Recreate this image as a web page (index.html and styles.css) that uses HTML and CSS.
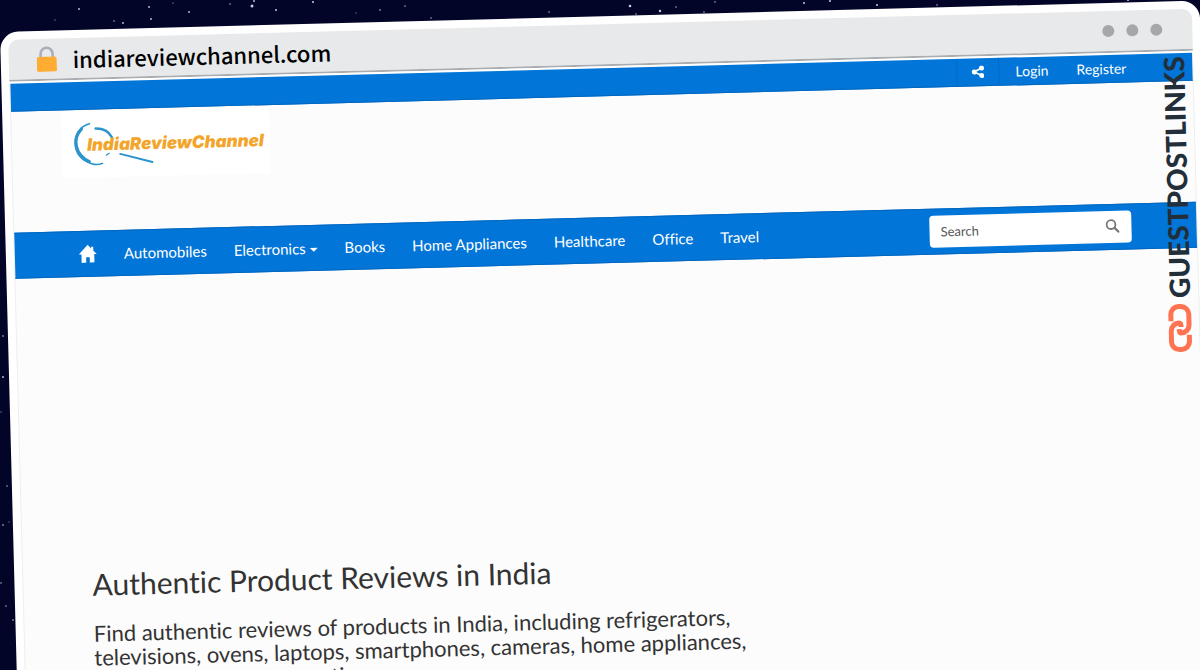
FILE: index.html
```html
<!DOCTYPE html>
<html lang="en">
<head>
    <meta charset="UTF-8">
    <meta name="viewport" content="width=device-width, initial-scale=1.0">
    <title>India Review Channel</title>
    <link rel="stylesheet" href="styles.css">
</head>
<body>
    <svg class="stars" aria-hidden="true" fill="#c9cbe6">
        <circle cx="55" cy="20" r="0.6"/><circle cx="79" cy="9" r="0.9"/><circle cx="123" cy="23" r="0.9"/>
        <circle cx="114" cy="21" r="0.7"/><circle cx="149" cy="7" r="0.9"/><circle cx="151" cy="19" r="0.9"/>
        <circle cx="173" cy="3" r="0.6"/><circle cx="189" cy="12" r="0.9"/><circle cx="230" cy="4" r="0.7"/>
        <circle cx="252" cy="6" r="1.5"/><circle cx="254" cy="1" r="0.9"/><circle cx="276" cy="10" r="1"/>
        <circle cx="313" cy="2" r="1"/><circle cx="380" cy="10" r="0.8"/><circle cx="356" cy="13" r="0.5"/>
        <circle cx="405" cy="6" r="0.7"/><circle cx="431" cy="18" r="0.7"/><circle cx="549" cy="12" r="0.7"/>
        <circle cx="630" cy="6" r="1.3"/><circle cx="660" cy="11" r="1.2"/><circle cx="636" cy="14" r="0.7"/>
        <circle cx="676" cy="7" r="0.7"/><circle cx="704" cy="12" r="0.7"/><circle cx="715" cy="2" r="0.7"/>
        <circle cx="804" cy="3" r="1"/><circle cx="830" cy="1" r="1"/><circle cx="877" cy="5" r="1"/>
        <circle cx="937" cy="5" r="0.7"/><circle cx="1128" cy="0" r="1"/><circle cx="3" cy="336" r="0.8"/>
        <circle cx="3" cy="377" r="0.9"/><circle cx="1" cy="412" r="0.6"/><circle cx="7" cy="486" r="0.7"/>
        <circle cx="3" cy="525" r="0.8"/><circle cx="9" cy="522" r="0.5"/><circle cx="1" cy="583" r="0.7"/>
        <circle cx="6" cy="606" r="0.7"/><circle cx="13" cy="620" r="0.8"/>
    </svg>

    <div class="browser">
        <div class="browser-bar">
            <svg class="lock" viewBox="0 0 20 26" aria-hidden="true">
                <path d="M4 13V8a6 6 0 0 1 12 0v5" fill="none" stroke="#aab0ba" stroke-width="2.6"/>
                <rect x="0" y="11" width="20" height="15" rx="2" fill="#ffac33"/>
            </svg>
            <span class="address">indiareviewchannel.com</span>
            <span class="dots"><i></i><i></i><i></i></span>
        </div>

        <div class="page">
            <div class="topbar">
                <a class="share" href="#" aria-label="Share">
                    <svg viewBox="0 0 14 14" width="13" height="13" fill="#fff" aria-hidden="true">
                        <path d="M11 3L3 7l8 4" fill="none" stroke="#fff" stroke-width="1.8"/>
                        <circle cx="11" cy="3" r="2.7"/><circle cx="3" cy="7" r="2.7"/><circle cx="11" cy="11" r="2.7"/>
                    </svg>
                </a>
                <a href="#">Login</a>
                <a href="#">Register</a>
            </div>

            <header class="header">
                <a class="logo" href="#">
                    <svg viewBox="0 0 208 66" role="img" aria-label="IndiaReviewChannel">
                        <g fill="none" stroke="#2c94cd" stroke-linecap="round">
                            <path d="M28 12C8 17 8 46 29 52q6 2 11 0" stroke-width="1.6"/>
                            <path d="M20 17C10 27 13 43 27 50" stroke-width="3"/>
                            <path d="M34 17c7 0 13 3 16 9" stroke-width="2.4"/>
                            <path d="M47 42l-3 2" stroke-width="1.2"/>
                            <path d="M58 43l32 9" stroke-width="2"/>
                        </g>
                        <text class="logo-text" x="25" y="39">IndiaReviewChannel</text>
                    </svg>
                </a>
            </header>

            <nav class="navbar">
                <a class="home" href="#" aria-label="Home">
                    <svg viewBox="0 0 18 18" width="18" height="18" fill="#fff" aria-hidden="true">
                        <path d="M9 0L0 9.500h2.600V18h4.600v-5.500h3.600V18h4.600V9.500H18L14.600 6V2h-2.200v1.700z"/>
                    </svg>
                </a>
                <a href="#">Automobiles</a>
                <a href="#">Electronics <span class="caret"></span></a>
                <a href="#">Books</a>
                <a href="#">Home Appliances</a>
                <a href="#">Healthcare</a>
                <a href="#">Office</a>
                <a href="#">Travel</a>
                <form class="search">
                    <input type="text" placeholder="Search" aria-label="Search">
                    <button type="submit" aria-label="Submit search">
                        <svg viewBox="0 0 14 14" width="14" height="14" fill="none" stroke="#777" aria-hidden="true">
                            <circle cx="5.6" cy="5.6" r="4.4" stroke-width="1.8"/>
                            <path d="M9 9l4 4" stroke-width="2.2" stroke-linecap="round"/>
                        </svg>
                    </button>
                </form>
            </nav>

            <main class="content">
                <h1>Authentic Product Reviews in India</h1>
                <h2>Find authentic reviews of products in India, including refrigerators, televisions, ovens, laptops, smartphones, cameras, home appliances, cars, computers, automotive</h2>
            </main>
        </div>

        <div class="brand">
            <svg viewBox="0 0 24 48" width="24" height="48" fill="none" stroke="#ff7350" stroke-width="5" aria-hidden="true">
                <path d="M3 17v-6.500a8 8 0 0 1 8-8h2a8 8 0 0 1 8 8V21a8 8 0 0 1-8 8q-2 0-2-4"/>
                <path d="M21 31v6.500a8 8 0 0 1-8 8h-2a8 8 0 0 1-8-8V27a8 8 0 0 1 8-8q2 0 2 4"/>
            </svg>
            <span>GUESTPOSTLINKS</span>
        </div>
    </div>
</body>
</html>
```
FILE: styles.css
```css
* {
    box-sizing: border-box;
}

body {
    margin: 0;
    height: 100vh;
    overflow: hidden;
    background-color: #020527;
    font-family: Lato, sans-serif;
    font-variant-ligatures: none;
    color: #333;
}

a {
    color: #fff;
    text-decoration: none;
}

.stars {
    position: absolute;
    width: 100%;
    height: 100%;
}

.browser {
    position: relative;
    margin-top: 32px;
    padding: 8px;
    background-color: #fff;
    border-radius: 18px;
    transform: rotate(-1.5deg);
    transform-origin: 0 0;
}

.browser-bar {
    display: flex;
    align-items: center;
    height: 42px;
    padding: 0 30px 0 28px;
    background-color: #e7e9eb;
    border-bottom: 2px solid #a9adb1;
    border-radius: 10px 10px 0 0;
}

.lock {
    width: 20px;
    height: 26px;
}

.address {
    margin-left: 16px;
    font-family: "Noto Sans CJK SC", sans-serif;
    font-size: 22px;
    font-weight: 500;
    line-height: 36px;
    color: #000;
}

.dots {
    display: flex;
    gap: 12px;
    margin-left: auto;
}

.dots i {
    width: 12px;
    height: 12px;
    border-radius: 50%;
    background-color: #a5a7ab;
}

.page {
    margin-top: 2px;
    min-height: 100vh;
    background-color: #fcfcfc;
    border-left: 1px solid #eee;
    border-right: 1px solid #eee;
}

.topbar {
    display: flex;
    justify-content: flex-end;
    height: 28px;
    padding-right: 52px;
    background-color: #0275d8;
    border-bottom: 1px solid #0267bf;
    font-size: 14px;
    line-height: 28px;
}

.topbar a {
    padding: 0 14px;
}

.topbar .share {
    display: flex;
    align-items: center;
    margin-right: 2px;
    border-left: 1px solid #026ac4;
    border-right: 1px solid #026ac4;
}

.header {
    height: 121px;
    padding: 2px 50px;
}

.logo {
    display: block;
    width: 208px;
    height: 66px;
    background-color: #fff;
}

.logo-text {
    font-family: Inter, sans-serif;
    font-size: 17px;
    font-weight: 900;
    font-style: italic;
    fill: #f2a52a;
}

.navbar {
    display: flex;
    align-items: center;
    height: 46px;
    padding: 0 65px 0 51px;
    background-color: #0275d8;
    border-top: 1px solid #0267bf;
    border-bottom: 1px solid #0267bf;
    font-size: 15px;
}

.navbar > a {
    padding: 0 14px 0 13px;
}

.home svg {
    display: block;
}

.caret {
    display: inline-block;
    border: 4px solid transparent;
    border-top-color: #fff;
    border-bottom: 0;
    vertical-align: middle;
}

.search {
    display: flex;
    width: 202px;
    height: 32px;
    margin-left: auto;
    background-color: #fff;
    border-radius: 4px;
}

.search input {
    flex: 1;
    min-width: 0;
    padding: 0 11px;
    border: none;
    background: none;
    font-family: Lato, sans-serif;
    font-size: 13px;
}

.search input::placeholder {
    color: #555;
}

.search button {
    padding: 0 12px;
    border: none;
    background: none;
    cursor: pointer;
}

.content {
    max-width: 750px;
    padding: 289px 0 0 69px;
}

h1 {
    margin: 0 0 20px;
    font-size: 30px;
    font-weight: normal;
    line-height: 36px;
}

h2 {
    margin: 0;
    font-size: 22px;
    font-weight: normal;
    line-height: 24px;
}

/* vertical tag laid over the right edge of the page */
.brand {
    position: absolute;
    top: 55px;
    right: 14px;
    display: flex;
    align-items: center;
    gap: 6px;
    writing-mode: vertical-rl;
    transform: rotate(180deg);
    font-size: 28px;
    font-weight: 900;
    line-height: 28px;
    color: #222e3a;
}
```
